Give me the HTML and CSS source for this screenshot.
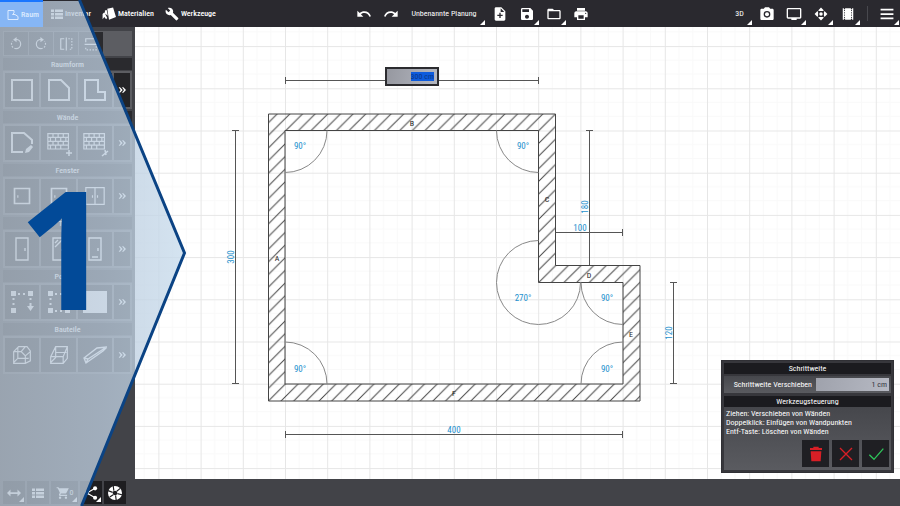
FILE: index.html
```html
<!DOCTYPE html>
<html lang="de">
<head>
<meta charset="utf-8">
<title>Raumplaner</title>
<link rel="stylesheet" href="styles.css">
</head>
<body>
<svg class="defs" aria-hidden="true">
  <symbol id="room" viewBox="0 0 24 24"><path d="M2 3h12v5l-3 3h5l6 4v6H2z" class="ln"/></symbol>
  <symbol id="list" viewBox="0 0 24 24"><path d="M0 3h6v5H0zM8 3h16v5H8zM0 10h6v5H0zM8 10h16v5H8zM0 17h6v5H0zM8 17h16v5H8z"/></symbol>
  <symbol id="material" viewBox="0 0 24 24"><path d="M9 3l10-2 5 16-12 5zM5 6l3-1 2 10-5-4zM1 12l3-3 5 10-2 2-3-4-3 4z"/></symbol>
  <symbol id="wrench" viewBox="0 0 24 24"><path d="M22.7 19l-9.1-9.1c.9-2.3.4-5-1.500-6.900-2-2-5-2.400-7.400-1.300L9 6 6 9 1.600 4.700C.4 7.100.9 10.100 2.900 12.100c1.900 1.900 4.600 2.400 6.900 1.500l9.100 9.100c.4.400 1 .4 1.400 0l2.300-2.300c.5-.4.5-1.100.1-1.400z"/></symbol>
  <symbol id="undo" viewBox="0 0 24 24"><path d="M12.500 8c-2.650 0-5.050.990-6.900 2.600L2 7v9h9l-3.620-3.620c1.390-1.160 3.160-1.880 5.120-1.880 3.540 0 6.550 2.310 7.600 5.500l2.370-.780C21.080 11.030 17.150 8 12.500 8z"/></symbol>
  <symbol id="newfile" viewBox="0 0 24 24"><path d="M14 2H6c-1.100 0-2 .9-2 2v16c0 1.100.9 2 2 2h12c1.100 0 2-.9 2-2V8zm2 13h-3v3h-2v-3H8v-2h3v-3h2v3h3zm-3-6V3.500L18.500 9z"/></symbol>
  <symbol id="save" viewBox="0 0 24 24"><path d="M17 3H5c-1.110 0-2 .9-2 2v14c0 1.100.890 2 2 2h14c1.100 0 2-.9 2-2V7zm-5 16c-1.660 0-3-1.340-3-3s1.340-3 3-3 3 1.340 3 3-1.340 3-3 3zm3-10H5V5h10z"/></symbol>
  <symbol id="folder" viewBox="0 0 24 24"><path d="M20 6h-8l-2-2H4c-1.100 0-2 .9-2 2v12c0 1.100.9 2 2 2h16c1.100 0 2-.9 2-2V8c0-1.100-.9-2-2-2zm0 12H4V8h16z"/></symbol>
  <symbol id="print" viewBox="0 0 24 24"><path d="M19 8H5c-1.660 0-3 1.340-3 3v6h4v4h12v-4h4v-6c0-1.660-1.340-3-3-3zm-3 11H8v-5h8zm3-7c-.55 0-1-.45-1-1s.45-1 1-1 1 .45 1 1-.45 1-1 1zM18 3H6v4h12z"/></symbol>
  <symbol id="camera" viewBox="0 0 24 24"><circle cx="12" cy="12.500" r="3"/><path d="M9 2L7.200 4H4c-1.100 0-2 .9-2 2v13c0 1.100.9 2 2 2h16c1.100 0 2-.9 2-2V6c0-1.100-.9-2-2-2h-3.200L15 2zm3 15.500a5 5 0 1 1 0-10 5 5 0 0 1 0 10z"/></symbol>
  <symbol id="screen" viewBox="0 0 24 24"><path d="M21 3H3c-1.100 0-2 .9-2 2v12c0 1.100.9 2 2 2h5v2h8v-2h5c1.100 0 2-.9 2-2V5c0-1.100-.9-2-2-2zm0 14H3V5h18z"/></symbol>
  <symbol id="move" viewBox="0 0 24 24"><circle cx="12" cy="12" r="3"/><path d="M12 1l5 5-2 1H9L7 6zM12 23l5-5-2-1H9l-2 1zM1 12l5-5 1 2v6l-1 2zM23 12l-5-5-1 2v6l1 2z"/></symbol>
  <symbol id="film" viewBox="0 0 24 24"><path d="M3 2h2v2h2V2h10v2h2V2h2v20h-2v-2h-2v2H7v-2H5v2H3z"/><path d="M6 5v14M18 5v14" stroke="#2a292f" stroke-width="1.500" stroke-dasharray="2 2"/></symbol>
  <symbol id="menu" viewBox="0 0 24 24"><path d="M1 3h22v3H1zM1 10.500h22v3H1zM1 18h22v3H1z"/></symbol>
  <symbol id="rotl" viewBox="0 0 24 24"><path d="M12 4a8 8 0 0 1 0 16" class="ln"/><path d="M12 20a8 8 0 0 1-6-13" class="ln" stroke-dasharray="3 2.500"/><path d="M13 0v9L7 4.500z"/></symbol>
  <symbol id="mirror" viewBox="0 0 24 24"><path d="M9 3H3v18h6M12.500 1v22" class="ln"/><path d="M16 3h6v18h-6" class="ln" stroke-dasharray="2.500 2.500"/></symbol>
  <symbol id="square" viewBox="0 0 24 24"><path d="M2 2h20v20H2z" class="ln"/></symbol>
  <symbol id="cut" viewBox="0 0 24 24"><path d="M2 2h12l8 8v12H2z" class="ln"/></symbol>
  <symbol id="lshape" viewBox="0 0 24 24"><path d="M2 2h13v12h7v8H2z" class="ln"/></symbol>
  <symbol id="drawwall" viewBox="0 0 24 24"><path d="M13 21H2V2h12l8 7v4" class="ln"/><path d="M15 22l1-4 5-4 2 2-4 5z"/></symbol>
  <symbol id="brick" viewBox="0 0 28 24"><path d="M1 1h24v18H1zM1 5.500h24M1 10h24M1 14.500h24M7 1v4M13 1v4M19 1v4M4 5v5M10 5v5M16 5v5M22 5v5M7 10v4M13 10v4M19 10v4M4 15v4M10 15v4M16 15v4" class="th"/></symbol>
  <symbol id="plus" viewBox="0 0 8 8"><path d="M4 1v6M1 4h6" stroke="currentColor" stroke-width="1.500"/></symbol>
  <symbol id="split" viewBox="0 0 8 8"><path d="M1 7l6-5M4 1l1 5" stroke="currentColor" stroke-width="1.500"/></symbol>
  <symbol id="window2" viewBox="0 0 24 24"><path d="M1 2h22v20H1zM12 2v20M9 11v3M15 11v3" class="th"/></symbol>
  <symbol id="window1" viewBox="0 0 24 24"><path d="M3 3h18v18H3z" class="ln"/><path d="M7 11v3" class="th"/></symbol>
  <symbol id="door" viewBox="0 0 24 24"><path d="M6 1h12v22H6zM15 11v3" class="th"/></symbol>
  <symbol id="doorglass" viewBox="0 0 24 24"><path d="M6 1h12v22H6zM8 10l7-7M8 6l3-3M15 12v2" class="th"/></symbol>
  <symbol id="doorslide" viewBox="0 0 24 24"><path d="M6 1h12v22H6zM15 11v3M9 20h6" class="th"/></symbol>
  <symbol id="platform" viewBox="0 0 24 24"><path d="M1 1h5v5H1zM18 1h5v5h-5zM1 18h5v5H1zM8 3h2v2H8zM13 3h2v2h-2zM2.500 8h2v2h-2zM2.500 13h2v2h-2zM19.500 8h2v2h-2zM19.500 13h2v3H24l-3.500 5-3.500-5h2.500z"/></symbol>
  <symbol id="platform2" viewBox="0 0 24 24"><path d="M1 1h5v5H1zM18 1h5v5h-5zM1 18h5v5H1zM18 18h5v5h-5zM8 3h2v2H8zM13 3h2v2h-2zM2.500 8h2v2h-2zM2.500 13h2v2h-2zM8 20h2v2H8zM13 20h2v2h-2z"/></symbol>
  <symbol id="block" viewBox="0 0 24 24"><path d="M0 1h24v22H0z"/></symbol>
  <symbol id="cube" viewBox="0 0 24 24"><path d="M2 8l6-6h10l4 5v12l-6 3H2zM2 8h9l5 5v9M11 8l5-6M16 13l6-5M7 3v13l-5 5M7 16h13" class="th"/></symbol>
  <symbol id="prism" viewBox="0 0 24 24"><path d="M2 14L8 2h14v14l-5 6H2zM2 14h15l5-12M17 14v8M8 2v13l-6 6M8 9h13" class="th"/></symbol>
  <symbol id="beam" viewBox="0 0 24 24"><path d="M1 15L14 5l10-1-4 4L3 20zM1 15l4 1L22 5M5 16l-2 4" class="th"/></symbol>
  <symbol id="width" viewBox="0 0 24 24"><path d="M0 12l6-6v4.500h12V6l6 6-6 6v-4.500H6V18z"/></symbol>
  <symbol id="cart" viewBox="0 0 24 24"><circle cx="7" cy="20" r="2"/><circle cx="17" cy="20" r="2"/><path d="M1 2v2h2l3.600 7.590L5.250 14c-.7 1.300.3 3 1.750 3h12v-2H7.400l1.100-2h7.450c.75 0 1.410-.410 1.750-1.030L22 4H5.210l-.940-2z"/></symbol>
  <symbol id="share" viewBox="0 0 24 24"><path d="M19 4L5 12l14 8" class="ln"/><circle cx="19" cy="4" r="3.500"/><circle cx="5" cy="12" r="3.500"/><circle cx="19" cy="20" r="3.500"/></symbol>
  <symbol id="shutter" viewBox="0 0 24 24"><circle cx="12" cy="12" r="12"/><path d="M9 0l1 8M21 4l-6 5M24 15l-8-2M14 24l-1-8M3 19l6-4M0 8l8 3" stroke="#1e1e21" stroke-width="2"/><circle cx="12" cy="12" r="4" fill="#1e1e21"/></symbol>
  <symbol id="trash" viewBox="0 0 24 24"><path d="M8 1h8v2h5v3H3V3h5zM4 8h16l-1 15H5z"/></symbol>
  <symbol id="cross" viewBox="0 0 24 24"><path d="M3 3l18 18M21 3L3 21" class="ln"/></symbol>
  <symbol id="check" viewBox="0 0 24 24"><path d="M2 13l7 7L23 4" class="ln"/></symbol>
  <symbol id="more" viewBox="0 0 12 12"><path d="M1 2h2l4 4-4 4H1l3-4zM6 2h2l4 4-4 4H6l3-4z"/></symbol>
</svg>

<header class="topbar">
  <nav class="tabs">
    <button class="tab active"><svg class="ic12"><use href="#room"/></svg>Raum</button>
    <button class="tab"><svg class="ic12"><use href="#list"/></svg>Inventar</button>
    <button class="tab"><svg class="ic14"><use href="#material"/></svg>Materialien</button>
    <button class="tab"><svg class="ic14"><use href="#wrench"/></svg>Werkzeuge</button>
  </nav>
  <div class="tools">
    <button class="tool" aria-label="Rückgängig"><svg class="ic16"><use href="#undo"/></svg></button>
    <button class="tool" aria-label="Wiederholen"><svg class="ic16 flip"><use href="#undo"/></svg></button>
    <button class="tool plan more">Unbenannte Planung</button>
    <button class="tool" aria-label="Neu"><svg class="ic16"><use href="#newfile"/></svg></button>
    <button class="tool more" aria-label="Speichern"><svg class="ic16"><use href="#save"/></svg></button>
    <button class="tool more" aria-label="Öffnen"><svg class="ic16"><use href="#folder"/></svg></button>
    <button class="tool" aria-label="Drucken"><svg class="ic16"><use href="#print"/></svg></button>
  </div>
  <div class="tools end">
    <button class="tool more">3D</button>
    <button class="tool" aria-label="Foto"><svg class="ic16"><use href="#camera"/></svg></button>
    <button class="tool more" aria-label="Ansicht"><svg class="ic16"><use href="#screen"/></svg></button>
    <button class="tool more" aria-label="Bewegen"><svg class="ic14"><use href="#move"/></svg></button>
    <button class="tool more" aria-label="Film"><svg class="ic14"><use href="#film"/></svg></button>
    <span class="sep"></span>
    <button class="tool more" aria-label="Menü"><svg class="ic14"><use href="#menu"/></svg></button>
  </div>
</header>

<div class="body">
  <aside class="sidebar">
    <div class="quick">
      <button aria-label="Links drehen"><svg class="ic14"><use href="#rotl"/></svg></button>
      <button aria-label="Rechts drehen"><svg class="ic14 flip"><use href="#rotl"/></svg></button>
      <button aria-label="Horizontal spiegeln"><svg class="ic14"><use href="#mirror"/></svg></button>
      <button aria-label="Vertikal spiegeln"><svg class="ic14 turn"><use href="#mirror"/></svg></button>
    </div>
    <section>
      <h2>Raumform</h2>
      <div class="row">
        <button aria-label="Quadrat"><svg class="ic24"><use href="#square"/></svg></button>
        <button aria-label="Abgeschrägt"><svg class="ic24"><use href="#cut"/></svg></button>
        <button aria-label="L-Form"><svg class="ic24"><use href="#lshape"/></svg></button>
        <button aria-label="Mehr"><svg class="ic8"><use href="#more"/></svg></button>
      </div>
    </section>
    <section>
      <h2>Wände</h2>
      <div class="row">
        <button aria-label="Wand zeichnen"><svg class="ic24"><use href="#drawwall"/></svg></button>
        <button aria-label="Wand einfügen"><svg class="ic24"><use href="#brick"/></svg><svg class="ic8 badge"><use href="#plus"/></svg></button>
        <button aria-label="Wand teilen"><svg class="ic24"><use href="#brick"/></svg><svg class="ic8 badge"><use href="#split"/></svg></button>
        <button aria-label="Mehr"><svg class="ic8"><use href="#more"/></svg></button>
      </div>
    </section>
    <section>
      <h2>Fenster</h2>
      <div class="row">
        <button aria-label="Fenster"><svg class="ic20"><use href="#window1"/></svg></button>
        <button aria-label="Fenster, Flügel"><svg class="ic20"><use href="#window1"/></svg></button>
        <button aria-label="Doppelfenster"><svg class="ic20"><use href="#window2"/></svg></button>
        <button aria-label="Mehr"><svg class="ic8"><use href="#more"/></svg></button>
      </div>
    </section>
    <section>
      <h2>Türen</h2>
      <div class="row">
        <button aria-label="Tür"><svg class="ic24"><use href="#door"/></svg></button>
        <button aria-label="Glastür"><svg class="ic24"><use href="#doorglass"/></svg></button>
        <button aria-label="Schiebetür"><svg class="ic24"><use href="#doorslide"/></svg></button>
        <button aria-label="Mehr"><svg class="ic8"><use href="#more"/></svg></button>
      </div>
    </section>
    <section>
      <h2>Podeste</h2>
      <div class="row">
        <button aria-label="Podest zeichnen"><svg class="ic24"><use href="#platform"/></svg></button>
        <button aria-label="Podest rechteckig"><svg class="ic24"><use href="#platform2"/></svg></button>
        <button aria-label="Podest"><svg class="ic24"><use href="#block"/></svg></button>
        <button aria-label="Mehr"><svg class="ic8"><use href="#more"/></svg></button>
      </div>
    </section>
    <section>
      <h2>Bauteile</h2>
      <div class="row">
        <button aria-label="Quader"><svg class="ic20"><use href="#cube"/></svg></button>
        <button aria-label="Prisma"><svg class="ic20"><use href="#prism"/></svg></button>
        <button aria-label="Balken"><svg class="ic24"><use href="#beam"/></svg></button>
        <button aria-label="Mehr"><svg class="ic8"><use href="#more"/></svg></button>
      </div>
    </section>
    <div class="dock">
      <button class="more" aria-label="Maße"><svg class="ic14"><use href="#width"/></svg></button>
      <button aria-label="Liste"><svg class="ic12"><use href="#list"/></svg></button>
      <button class="more" aria-label="Warenkorb"><svg class="ic14"><use href="#cart"/></svg>0</button>
      <button class="more" aria-label="Teilen"><svg class="ic14"><use href="#share"/></svg></button>
      <button aria-label="Rendern"><svg class="ic14"><use href="#shutter"/></svg></button>
    </div>
  </aside>

  <main class="stage">
    <div class="canvas">
      <svg class="plan-view" viewBox="135 27 765 452" preserveAspectRatio="xMinYMin slice">
        <defs>
          <pattern id="grid" x="285" y="130.500" width="42.200" height="42.200" patternUnits="userSpaceOnUse">
            <path d="M14 0v42.200M28 0v42.200M0 14h42.200M0 28h42.200" class="minor"/>
            <path d="M.5 0v42.200M0 .5h42.200" class="major"/>
          </pattern>
          <pattern id="hatch" x="11.600" y="0" width="12.650" height="12.650" patternUnits="userSpaceOnUse">
            <path d="M-1 13.650L13.650-1M-1 1L1-1M11.650 13.650L13.650 11.650" class="hatch"/>
          </pattern>
        </defs>
        <rect x="135" y="27" width="765" height="452" fill="url(#grid)"/>
        <path class="wall" fill-rule="evenodd" d="M268.500 114H555.500V265.500H640V401H268.500zM285 130.500V384H623V282.500H538.500V130.500z"/>
        <g class="arc">
          <path d="M327 130.500A42 42 0 0 1 285 172.500"/>
          <path d="M496.500 130.500A42 42 0 0 0 538.500 172.500"/>
          <path d="M538.500 240.500A42 42 0 1 0 580.500 282.500"/>
          <path d="M581 282.500A42 42 0 0 0 623 324.500"/>
          <path d="M285 342A42 42 0 0 1 327 384"/>
          <path d="M581 384A42 42 0 0 1 623 342"/>
        </g>
        <g class="dim">
          <path d="M285.500 80.500H538.500M285.500 77v7M538.500 77v7"/>
          <path d="M235.500 130.500V383.500M232 130.500h7M232 383.500h7"/>
          <path d="M589.500 130.500V265M586 130.500h7"/>
          <path d="M555.500 232.500H622.500M622.500 229v7"/>
          <path d="M673.500 282.500V383.500M670 282.500h7M670 383.500h7"/>
          <path d="M285.500 434.500H622.500M285.500 431v7M622.500 431v7"/>
        </g>
        <g class="measure">
          <text x="300" y="149">90°</text><text x="523" y="149">90°</text>
          <text x="523" y="301">270°</text><text x="607" y="301">90°</text>
          <text x="300" y="372">90°</text><text x="607" y="372">90°</text>
          <text x="580" y="231">100</text><text x="454" y="433">400</text>
          <text transform="translate(234 257) rotate(-90)">300</text>
          <text transform="translate(588 207) rotate(-90)">180</text>
          <text transform="translate(672 333) rotate(-90)">120</text>
        </g>
        <g class="name">
          <text x="277" y="261">A</text><text x="412" y="126">B</text><text x="547" y="202">C</text>
          <text x="589" y="278">D</text><text x="631" y="337">E</text><text x="454" y="396">F</text>
        </g>
      </svg>
      <label class="length"><input type="text" value="300 cm" aria-label="Wandlänge"></label>
      <form class="panel">
        <h3>Schrittweite</h3>
        <div class="field"><label for="step">Schrittweite Verschieben</label><input id="step" type="text" value="1 cm"></div>
        <h3>Werkzeugsteuerung</h3>
        <div class="control">
          <p>Ziehen: Verschieben von Wänden<br>Doppelklick: Einfügen von Wandpunkten<br>Entf-Taste: Löschen von Wänden</p>
          <div class="actions">
            <button type="button" class="red" aria-label="Löschen"><svg class="ic16"><use href="#trash"/></svg></button>
            <button type="button" class="red" aria-label="Abbrechen"><svg class="ic16"><use href="#cross"/></svg></button>
            <button type="button" class="green" aria-label="Bestätigen"><svg class="ic16"><use href="#check"/></svg></button>
          </div>
        </div>
      </form>
    </div>
  </main>
</div>

<div class="step-marker">
  <svg viewBox="0 0 190 506" preserveAspectRatio="none">
    <defs><linearGradient id="veil" x1="0" x2="1" y1="0" y2="0">
      <stop offset="0" stop-color="#b2bfcd"/><stop offset=".55" stop-color="#bbcbdc"/><stop offset="1" stop-color="#c8dced"/>
    </linearGradient></defs>
    <path d="M0 1H80L185 253L82 506H0z" fill="url(#veil)" fill-opacity=".78"/>
    <path d="M79.500 0L184.500 253L81.500 506" fill="none" stroke="#0b4384" stroke-width="3"/>
  </svg>
  <strong>1</strong>
</div>
</body>
</html>
```
FILE: styles.css
```css
* { box-sizing: border-box; }

body {
  margin: 0;
  height: 100vh;
  display: flex;
  flex-direction: column;
  position: relative;
  overflow: hidden;
  background: #424348;
  color: #fff;
  font: 8px/10px "Roboto Condensed", "Liberation Sans Narrow", Roboto, sans-serif;
}

button {
  display: flex;
  align-items: center;
  justify-content: center;
  position: relative;
  margin: 0;
  padding: 0;
  border: 0;
  background: none;
  color: inherit;
  font: inherit;
}

h2, h3, p { margin: 0; font-size: 8px; font-weight: 400; }

svg { display: block; fill: currentColor; flex: none; }
.defs { position: absolute; width: 0; height: 0; }
.ln { fill: none; stroke: currentColor; stroke-width: 2; }
.th { fill: none; stroke: currentColor; stroke-width: 1.4; }
.ic8 { width: 8px; height: 8px; }
.ic12 { width: 12px; height: 12px; }
.ic14 { width: 14px; height: 14px; }
.ic16 { width: 16px; height: 16px; }
.ic20 { width: 20px; height: 20px; }
.ic24 { width: 24px; height: 24px; }
.flip { transform: scaleX(-1); }
.turn { transform: rotate(90deg); }

.more::after {
  content: "";
  position: absolute;
  right: 1px;
  bottom: 2px;
  border-left: 5px solid transparent;
  border-bottom: 5px solid #fff;
}

.topbar {
  display: grid;
  grid-template-columns: 7fr 5fr 6fr;
  height: 27px;
  background: #2a292f;
}
.tabs, .tools { display: flex; }
.end { justify-content: flex-end; }
.tab { gap: 2px; padding: 0 3px 0 8px; font-weight: 500; }
.tab.active {
  z-index: 3;
  padding: 0 4px 0 7px;
  background: #86b6f5;
  border-top: 2px solid #1976ff;
  color: #dcebff;
}
.tool { width: 27px; }
.tool.plan { width: 82px; padding-right: 2px; }
.sep { width: 1px; margin: 6px 5px 6px 6px; background: #48484e; }

.body { display: flex; flex: 1; min-height: 0; }

.sidebar {
  display: flex;
  flex-direction: column;
  width: 135px;
  padding: 4px 3px 2px;
}
.quick {
  display: flex;
  gap: 1px;
  height: 25px;
  padding: 1px;
  background: #5c5d62;
}
.quick button { width: 24px; background: #2a2a2e; }
.sidebar section { padding-top: 2px; }
.sidebar h2 {
  height: 12px;
  line-height: 14px;
  background: #2a2a2e;
  text-align: center;
  font-weight: 500;
}
.row {
  display: grid;
  grid-template-columns: 35fr 35fr 35fr 16fr;
  gap: 2px;
  margin-top: 1px;
  height: 38px;
  padding: 2px;
  background: #5c5d62;
}
.row button { background: #242427; }
.badge { position: absolute; right: 3px; bottom: 3px; }

.dock { display: flex; gap: 2px; margin-top: auto; }
.dock button { width: 22px; height: 23px; background: #1e1e21; }
.dock button:nth-child(3) { width: 27px; }

.stage { flex: 1; min-width: 0; padding-bottom: 27px; }
.canvas { position: relative; height: 100%; background: #fff; overflow: hidden; }
.plan-view { width: 100%; height: 100%; }
.minor { stroke: #f9f9f9; }
.major { stroke: #e6e6e6; }
.hatch { stroke: #444; stroke-width: 1; }
.wall { fill: url(#hatch); stroke: #444; stroke-width: 1; }
.arc { fill: none; stroke: #888; }
.dim { fill: none; stroke: #555; }
.measure, .name { text-anchor: middle; font-size: 9px; }
.measure { fill: #2491ce; }
.name { fill: #222; font-size: 8px; }

.length { position: absolute; left: 250px; top: 40px; }
.length input {
  display: block;
  width: 54px;
  height: 19px;
  padding: 0 3px;
  border: 2px solid #2b2b2f;
  outline: 0;
  background: linear-gradient(to right, transparent 48%, #0d5bdd 48%) center / calc(100% - 6px) 9px no-repeat, linear-gradient(100deg, #9698a0, #b4b7c0);
  color: #0a3686;
  font: inherit;
  text-align: right;
}

.panel {
  position: absolute;
  right: 6px;
  bottom: 6px;
  width: 173px;
  padding: 2px;
  border: 1px solid #303035;
  background: #37373c;
}
.panel h3 { height: 11px; line-height: 11px; background: #1b1b1f; text-align: center; }
.field {
  display: flex;
  align-items: center;
  justify-content: flex-end;
  gap: 4px;
  height: 17px;
  margin: 2px 0 3px;
  padding: 0 2px;
  background: linear-gradient(#46474c, #5a5b60);
}
.field input {
  width: 73px;
  height: 13px;
  padding: 0 2px;
  border: 0;
  background: linear-gradient(100deg, #9fa2ac, #b6b9c3);
  color: #33363f;
  font: inherit;
  text-align: right;
}
.control { padding: 2px 2px 3px; background: linear-gradient(#46474c, #5a5b60); }
.control p { line-height: 9px; }
.actions { display: flex; justify-content: flex-end; gap: 3px; margin-top: 4px; }
.actions button { width: 27px; height: 27px; background: #1f1f23; }
.red { color: #d81f26; }
.green { color: #2fc45a; }

.step-marker { position: absolute; inset: 0 auto 0 0; width: 190px; z-index: 2; pointer-events: none; }
.step-marker svg { width: 100%; height: 100%; }
.step-marker strong {
  position: absolute;
  left: 18px;
  top: 50%;
  margin-top: -89px;
  color: #024a98;
  font: 700 165px/165px "Open Sans", "Noto Sans", sans-serif;
}
```
